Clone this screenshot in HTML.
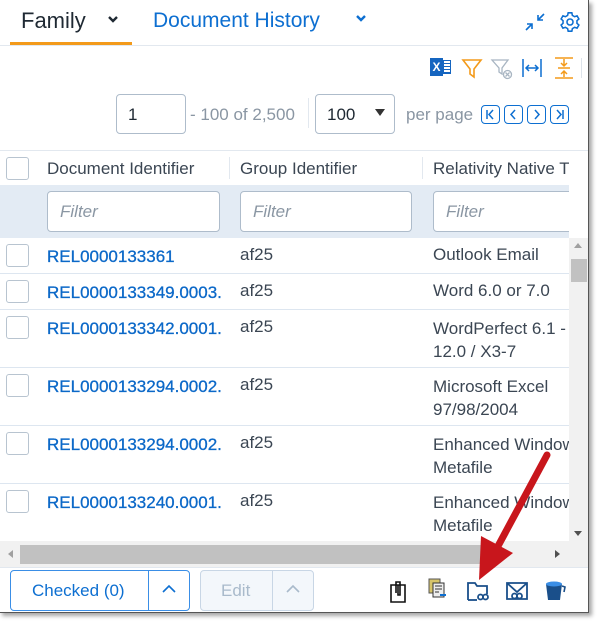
<!DOCTYPE html>
<html><head><style>
*{margin:0;padding:0;box-sizing:border-box}
body{width:600px;height:622px;background:#fff;font-family:"Liberation Sans",sans-serif;position:relative;overflow:hidden}
.a{position:absolute}
.frame{left:-1px;top:0;width:590px;height:613px;border:1px solid #555;border-top:none;box-shadow:3px 3px 4px rgba(0,0,0,.35);background:#fff;overflow:hidden}
.t{color:#3b4653;font-size:17px;white-space:nowrap}
.c3{width:136px;overflow:hidden}
.lnk{color:#0b68c8;font-size:17px;white-space:nowrap;-webkit-text-stroke:.3px #0b68c8}
.cb{width:23px;height:23px;border:1px solid #b8c4d0;border-radius:3px;background:#fff}
.row{left:0;width:569px;border-bottom:1px solid #dde6f0}
.filt{height:41px;border:1px solid #aebccb;border-radius:4px;background:#fff;color:#8a96a3;font-style:italic;font-size:17px;padding:10px 12px}
.pb{width:19px;height:19px;border:1.5px solid #0d6fd1;border-radius:4px}
</style></head><body>
<div class="a frame">
<div class="a" style="left:21px;top:8px;font-size:22px;color:#1f2933">Family</div>
<svg class="a" style="left:107px;top:15px" width="12" height="9" viewBox="0 0 12 9" fill="none" stroke="#1f2933" stroke-width="2.4"><path d="M2 2l4 4 4-4"/></svg>
<div class="a" style="left:10px;top:42px;width:122px;height:3px;background:#f39a1a"></div>
<div class="a" style="left:0;top:45px;width:588px;height:1px;background:#e2e8ef"></div>
<div class="a" style="left:153px;top:9px;font-size:21px;color:#0d6fd1">Document History</div>
<svg class="a" style="left:355px;top:14px" width="12" height="9" viewBox="0 0 12 9" fill="none" stroke="#0d6fd1" stroke-width="2.4"><path d="M2 2l4 4 4-4"/></svg>
<svg class="a" style="left:524px;top:12px" width="22" height="20" viewBox="0 0 22 20" fill="none" stroke="#0d6fd1" stroke-width="1.6"><path d="M2 18l6-6M3 12h5v5M20 2l-6 6M19 8h-5V3"/></svg>
<svg class="a" style="left:559px;top:11px" width="22" height="22" viewBox="0 0 24 24" fill="none" stroke="#0d6fd1" stroke-width="1.7"><circle cx="12" cy="12" r="3.3"/><path d="M10 2h4l.6 2.8 2.4 1.4 2.7-.9 2 3.4-2.1 1.9v2.8l2.1 1.9-2 3.4-2.7-.9-2.4 1.4L14 22h-4l-.6-2.8-2.4-1.4-2.7.9-2-3.4 2.1-1.9v-2.8L2.3 8.7l2-3.4 2.7.9 2.4-1.4z"/></svg>
<div class="a" style="left:430px;top:58px;width:13px;height:18px;background:#1565c0;color:#fff;font-size:12px;font-weight:bold;text-align:center;line-height:18px">X</div>
<div class="a" style="left:443px;top:60px;width:8px;height:14px;border:1px solid #1565c0;background:repeating-linear-gradient(#fff 0 2px,#1565c0 2px 3px)"></div>
<svg class="a" style="left:461px;top:57px" width="22" height="22" viewBox="0 0 22 22" fill="none" stroke="#f39a1a" stroke-width="1.6"><path d="M2 3h18l-7 9v8l-4-3v-5z"/></svg>
<svg class="a" style="left:490px;top:57px" width="24" height="24" viewBox="0 0 24 24" fill="none" stroke="#a8b5c2" stroke-width="1.3"><path d="M2 3h16l-6 8v6l-3-2v-4z"/><circle cx="17.5" cy="17.5" r="4"/><path d="M15.5 15.5l4 4M19.5 15.5l-4 4"/></svg>
<svg class="a" style="left:521px;top:58px" width="22" height="20" viewBox="0 0 22 20" fill="none" stroke="#0d6fd1" stroke-width="1.5"><path d="M2 1v18M20 1v18M5 10h12M8 7l-3 3 3 3M14 7l3 3-3 3"/></svg>
<svg class="a" style="left:554px;top:57px" width="20" height="22" viewBox="0 0 20 22" fill="none" stroke="#f39a1a" stroke-width="1.5"><path d="M1 1h18M1 21h18M10 2v7M7 6l3 3 3-3M10 20v-6M7 17l3-3 3 3M4 11h12"/></svg>
<div class="a" style="left:581px;top:58px;width:1px;height:20px;background:#dde3ea"></div>
<div class="a" style="left:116px;top:94px;width:70px;height:40px;border:1px solid #aebccb;border-radius:4px;font-size:17px;color:#1f2933;padding:10px 11px">1</div>
<div class="a" style="left:190px;top:105px;font-size:17px;color:#8a96a3">- 100 of 2,500</div>
<div class="a" style="left:308px;top:98px;width:1px;height:30px;background:#e2e8ef"></div>
<div class="a" style="left:315px;top:94px;width:80px;height:40px;border:1px solid #aebccb;border-radius:4px;font-size:17px;color:#1f2933;padding:10px 11px">100</div>
<div class="a" style="left:375px;top:109px;width:0;height:0;border-left:5px solid transparent;border-right:5px solid transparent;border-top:7px solid #333"></div>
<div class="a" style="left:406px;top:105px;font-size:17px;color:#8a96a3">per page</div>
<div class="a pb" style="left:481px;top:105px"></div><svg class="a" style="left:481px;top:105px" width="19" height="19" viewBox="0 0 19 19" fill="none" stroke="#0d6fd1" stroke-width="1.5"><path d="M6 5v9M12 5l-4 4.5 4 4.5"/></svg>
<div class="a pb" style="left:504px;top:105px"></div><svg class="a" style="left:504px;top:105px" width="19" height="19" viewBox="0 0 19 19" fill="none" stroke="#0d6fd1" stroke-width="1.5"><path d="M11 5l-4 4.5 4 4.5"/></svg>
<div class="a pb" style="left:527px;top:105px"></div><svg class="a" style="left:527px;top:105px" width="19" height="19" viewBox="0 0 19 19" fill="none" stroke="#0d6fd1" stroke-width="1.5"><path d="M8 5l4 4.5-4 4.5"/></svg>
<div class="a pb" style="left:550px;top:105px"></div><svg class="a" style="left:550px;top:105px" width="19" height="19" viewBox="0 0 19 19" fill="none" stroke="#0d6fd1" stroke-width="1.5"><path d="M7 5l4 4.5-4 4.5M13 5v9"/></svg>
<div class="a" style="left:0;top:150px;width:588px;height:1px;background:#e2e8ef"></div>
<div class="a cb" style="left:6px;top:157px"></div>
<div class="a t" style="left:47px;top:159px">Document Identifier</div>
<div class="a" style="left:229px;top:157px;width:1px;height:22px;background:#e2e8ef"></div>
<div class="a t" style="left:240px;top:159px">Group Identifier</div>
<div class="a" style="left:422px;top:157px;width:1px;height:22px;background:#e2e8ef"></div>
<div class="a t c3" style="left:433px;top:159px">Relativity Native T</div>
<div class="a" style="left:0;top:185px;width:569px;height:53px;background:#e3ebf4"></div>
<div class="a filt" style="left:47px;top:191px;width:173px">Filter</div>
<div class="a filt" style="left:240px;top:191px;width:172px">Filter</div>
<div class="a filt" style="left:433px;top:191px;width:140px">Filter</div>
<div class="a row" style="top:238px;height:36px"></div>
<div class="a row" style="top:274px;height:36px"></div>
<div class="a row" style="top:310px;height:58px"></div>
<div class="a row" style="top:368px;height:58px"></div>
<div class="a row" style="top:426px;height:58px"></div>
<div class="a row" style="top:484px;height:58px;border:none"></div>
<div class="a cb" style="left:6px;top:244px"></div><div class="a lnk" style="left:47px;top:247px">REL0000133361</div><div class="a t" style="left:240px;top:245px">af25</div><div class="a t c3" style="left:433px;top:245px">Outlook Email</div>
<div class="a cb" style="left:6px;top:280px"></div><div class="a lnk" style="left:47px;top:283px">REL0000133349.0003.</div><div class="a t" style="left:240px;top:281px">af25</div><div class="a t c3" style="left:433px;top:281px">Word 6.0 or 7.0</div>
<div class="a cb" style="left:6px;top:316px"></div><div class="a lnk" style="left:47px;top:319px">REL0000133342.0001.</div><div class="a t" style="left:240px;top:317px">af25</div><div class="a t c3" style="left:433px;top:317px;line-height:23px">WordPerfect 6.1 -<br>12.0 / X3-7</div>
<div class="a cb" style="left:6px;top:374px"></div><div class="a lnk" style="left:47px;top:377px">REL0000133294.0002.</div><div class="a t" style="left:240px;top:375px">af25</div><div class="a t c3" style="left:433px;top:375px;line-height:23px">Microsoft Excel<br>97/98/2004</div>
<div class="a cb" style="left:6px;top:432px"></div><div class="a lnk" style="left:47px;top:435px">REL0000133294.0002.</div><div class="a t" style="left:240px;top:433px">af25</div><div class="a t c3" style="left:433px;top:433px;line-height:23px">Enhanced Window<br>Metafile</div>
<div class="a cb" style="left:6px;top:490px"></div><div class="a lnk" style="left:47px;top:493px">REL0000133240.0001.</div><div class="a t" style="left:240px;top:491px">af25</div><div class="a t c3" style="left:433px;top:491px;line-height:23px">Enhanced Window<br>Metafile</div>
<div class="a" style="left:569px;top:185px;width:19px;height:53px;background:#fff"></div>
<div class="a" style="left:569px;top:238px;width:19px;height:303px;background:#f1f1f1"></div>
<div class="a" style="left:574px;top:243px;border-left:4px solid transparent;border-right:4px solid transparent;border-bottom:5px solid #a0a0a0"></div>
<div class="a" style="left:571px;top:259px;width:16px;height:23px;background:#c1c1c1"></div>
<div class="a" style="left:574px;top:531px;border-left:4px solid transparent;border-right:4px solid transparent;border-top:5px solid #505050"></div>
<div class="a" style="left:0;top:541px;width:588px;height:26px;background:#f1f1f1"></div>
<div class="a" style="left:20px;top:545px;width:463px;height:19px;background:#c1c1c1"></div>
<div class="a" style="left:8px;top:550px;border-top:4px solid transparent;border-bottom:4px solid transparent;border-right:5px solid #a0a0a0"></div>
<div class="a" style="left:555px;top:550px;border-top:4px solid transparent;border-bottom:4px solid transparent;border-left:5px solid #505050"></div>
<div class="a" style="left:0;top:567px;width:588px;height:1px;background:#e2e8ef"></div>
<div class="a" style="left:10px;top:570px;width:180px;height:41px;border:1px solid #3a8ee6;border-radius:4px"></div>
<div class="a" style="left:148px;top:571px;width:1px;height:39px;background:#3a8ee6"></div>
<div class="a" style="left:32px;top:581px;font-size:17px;color:#0d6fd1">Checked (0)</div>
<svg class="a" style="left:160px;top:583px" width="18" height="12" viewBox="0 0 18 12" fill="none" stroke="#0d6fd1" stroke-width="1.6"><path d="M3 9l6-6 6 6"/></svg>
<div class="a" style="left:200px;top:570px;width:114px;height:41px;border:1px solid #c8d6e5;border-radius:4px;background:#f3f7fb"></div>
<div class="a" style="left:272px;top:571px;width:1px;height:39px;background:#c8d6e5"></div>
<div class="a" style="left:221px;top:581px;font-size:17px;color:#a9bacb">Edit</div>
<svg class="a" style="left:284px;top:583px" width="18" height="12" viewBox="0 0 18 12" fill="none" stroke="#a9bacb" stroke-width="1.6"><path d="M3 9l6-6 6 6"/></svg>
<svg class="a" style="left:388px;top:580px" width="20" height="24" viewBox="0 0 20 24" fill="none" stroke="#111" stroke-width="1.6"><path d="M3 5h14v17H3z"/><path d="M8 13V2h4v13h-2V5"/></svg>
<svg class="a" style="left:427px;top:577px" width="22" height="24" viewBox="0 0 22 24"><rect x="2" y="2" width="11" height="14" fill="#d6c46a" stroke="#555"/><rect x="6" y="6" width="11" height="14" fill="#eee" stroke="#333"/><path d="M8 9h7M8 12h7M8 15h4" stroke="#333"/><path d="M13 18h6" stroke="#0d6fd1" stroke-width="2"/></svg>
<svg class="a" style="left:466px;top:580px" width="24" height="22" viewBox="0 0 24 22" fill="none" stroke="#1a4f8a" stroke-width="1.8"><path d="M2 20V3h7l2 3h10v8"/><path d="M2 20h9"/><circle cx="14.5" cy="17" r="2.5"/><circle cx="19.5" cy="17" r="2.5"/></svg>
<svg class="a" style="left:505px;top:580px" width="24" height="22" viewBox="0 0 24 22" fill="none" stroke="#1a4f8a" stroke-width="1.8"><path d="M2 3h20v16H2z M2 3l10 9 10-9"/><circle cx="9.5" cy="16" r="2.5"/><circle cx="14.5" cy="16" r="2.5"/></svg>
<svg class="a" style="left:542px;top:579px" width="24" height="24" viewBox="0 0 24 24"><path d="M4 5h16l-2 16H6z" fill="#1a4f8a"/><ellipse cx="12" cy="5" rx="8" ry="2.5" fill="#3a8ee6"/><path d="M20 7l3 1-1 5" fill="none" stroke="#1a4f8a" stroke-width="1.6"/></svg>
<svg class="a" style="left:0;top:0" width="600" height="622" viewBox="0 0 600 622"><path d="M547 455L497 548" stroke="#c8161c" stroke-width="7" stroke-linecap="round"/><path d="M479 580L481 536L513 553Z" fill="#c8161c"/></svg>
</div>
</body></html>
